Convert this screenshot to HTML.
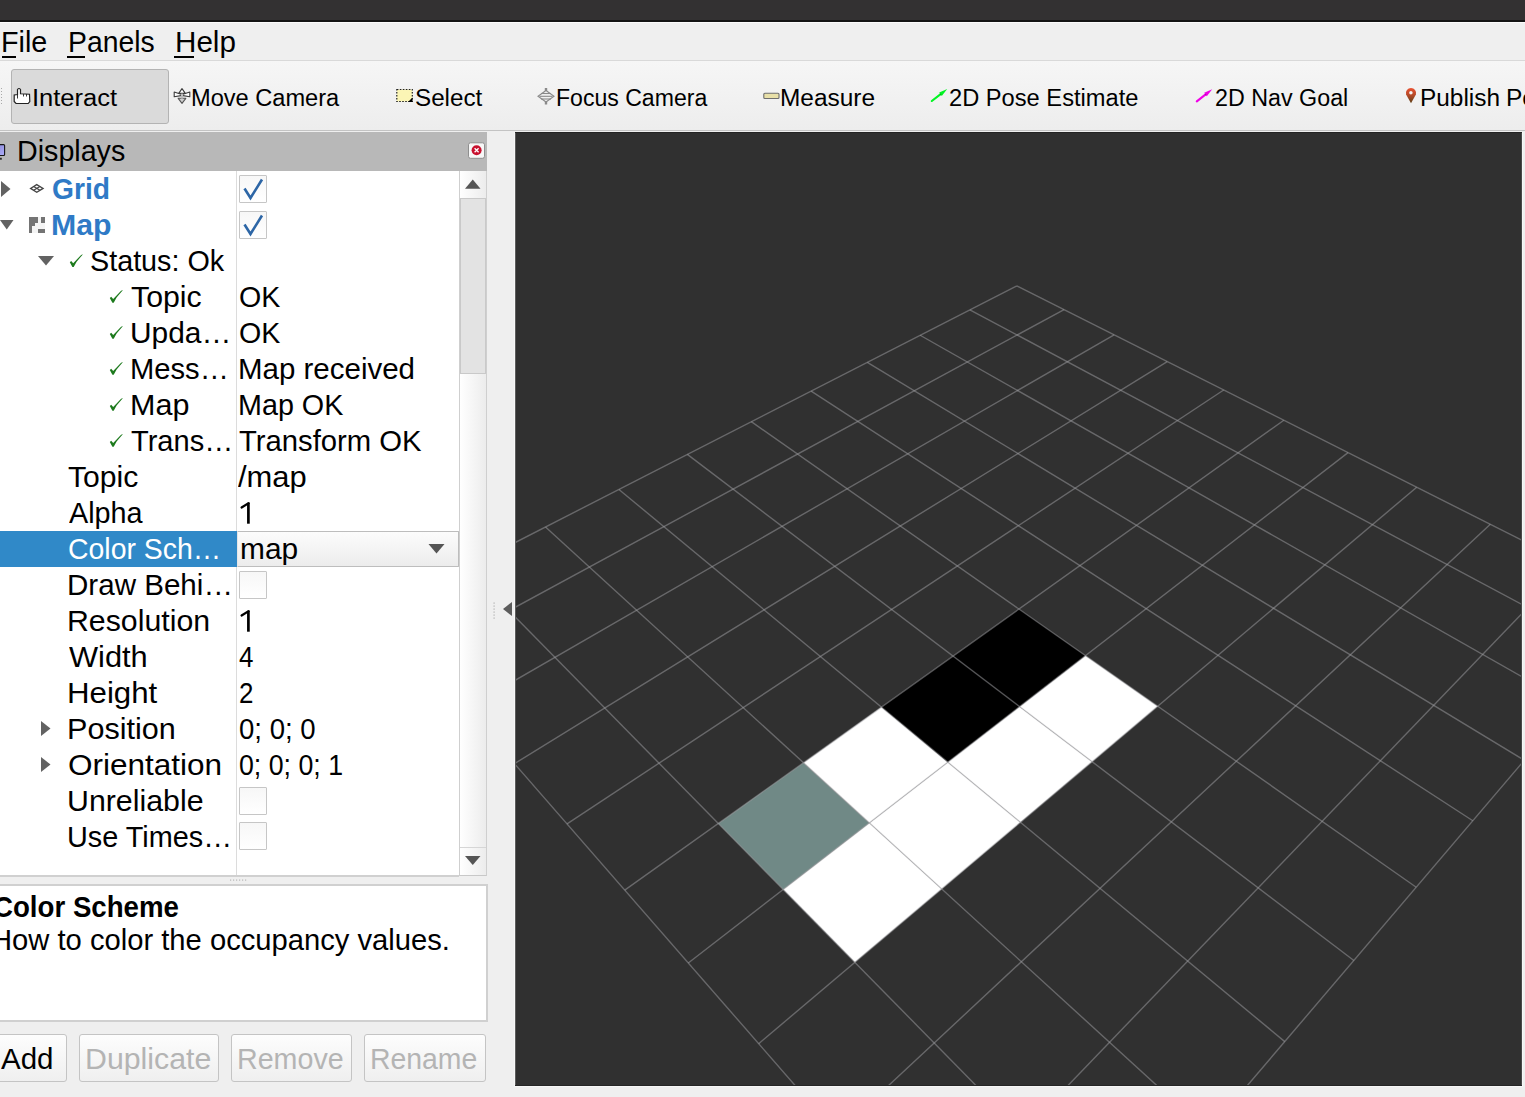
<!DOCTYPE html><html><head><meta charset="utf-8"><title>RViz</title><style>
*{margin:0;padding:0;box-sizing:border-box}
html,body{width:1525px;height:1097px;overflow:hidden;background:#efefef;font-family:"Liberation Sans",sans-serif;position:relative}
.t{position:absolute;white-space:pre;transform-origin:0 0}
.a{position:absolute}
svg.g3d line{stroke:#a0a0a4;stroke-opacity:0.5;stroke-width:1.4}
</style></head><body>
<div class="a" style="left:0;top:0;width:1525px;height:20px;background:#333132"></div><div class="a" style="left:0;top:20px;width:1525px;height:2px;background:#141414"></div><div class="a" style="left:0;top:22px;width:1525px;height:1px;background:#fbfbfb"></div><div class="a" style="left:0;top:60px;width:1525px;height:1px;background:#d9d9d9"></div><div class="a" style="left:0;top:61px;width:1525px;height:69px;background:linear-gradient(#f6f6f6,#ededed)"></div><div class="a" style="left:0;top:130px;width:1525px;height:1px;background:#c3c3c3"></div><div class="a" style="left:11px;top:69px;width:158px;height:55px;background:#dadada;border:1px solid #b3b3b3;border-radius:3px"></div><div class="a" style="left:0;top:132px;width:487px;height:39px;background:#b8b8b8"></div><div class="a" style="left:0;top:171px;width:459px;height:706px;background:#fff;border-bottom:2px solid #d0d0d0"></div><div class="a" style="left:236px;top:171px;width:1px;height:704px;background:#dcdcdc"></div><div class="a" style="left:0;top:531px;width:237px;height:36px;background:#3089c8"></div><div class="a" style="left:459px;top:171px;width:28px;height:705px;background:linear-gradient(90deg,#fff,#ececec);border-left:1px solid #cfcfcf;border-right:1px solid #cfcfcf;border-bottom:1px solid #c8c8c8"></div><div class="a" style="left:460px;top:198px;width:26px;height:176px;background:#e3e3e3;border:1px solid #c9c9c9"></div><div class="a" style="left:460px;top:847px;width:26px;height:1px;background:#d6d6d6"></div><div class="a" style="left:-2px;top:884px;width:490px;height:138px;background:#fff;border:2px solid #d0d0d0"></div><div class="a" style="left:1px;top:88px;width:1px;height:1px;background:#a8a8a8"></div><div class="a" style="left:1px;top:91px;width:1px;height:1px;background:#a8a8a8"></div><div class="a" style="left:1px;top:94px;width:1px;height:1px;background:#a8a8a8"></div><div class="a" style="left:1px;top:97px;width:1px;height:1px;background:#a8a8a8"></div><div class="a" style="left:1px;top:100px;width:1px;height:1px;background:#a8a8a8"></div><div class="a" style="left:1px;top:103px;width:1px;height:1px;background:#a8a8a8"></div><div class="a" style="left:237px;top:531px;width:222px;height:36px;background:linear-gradient(#fcfcfc,#ececec);border:1px solid #bdbdbd;border-left-color:#e6e6e6;border-radius:1px"></div><div class="a" style="left:239px;top:175px;width:28px;height:28px;background:linear-gradient(#f7f7f7,#ffffff);border:1px solid #c6c6c6;border-radius:1px"></div><div class="a" style="left:239px;top:211px;width:28px;height:28px;background:linear-gradient(#f7f7f7,#ffffff);border:1px solid #c6c6c6;border-radius:1px"></div><div class="a" style="left:239px;top:571px;width:28px;height:28px;background:linear-gradient(#f7f7f7,#ffffff);border:1px solid #c6c6c6;border-radius:1px"></div><div class="a" style="left:239px;top:787px;width:28px;height:28px;background:linear-gradient(#f7f7f7,#ffffff);border:1px solid #c6c6c6;border-radius:1px"></div><div class="a" style="left:239px;top:822px;width:28px;height:28px;background:linear-gradient(#f7f7f7,#ffffff);border:1px solid #c6c6c6;border-radius:1px"></div><div class="a" style="left:-6px;top:1034px;width:72.5px;height:48px;background:linear-gradient(#fdfdfd,#efefef);border:1px solid #c4c4c4;border-radius:3px"></div><div class="a" style="left:79px;top:1034px;width:140px;height:48px;background:linear-gradient(#fdfdfd,#efefef);border:1px solid #c4c4c4;border-radius:3px"></div><div class="a" style="left:231px;top:1034px;width:120.5px;height:48px;background:linear-gradient(#fdfdfd,#efefef);border:1px solid #c4c4c4;border-radius:3px"></div><div class="a" style="left:364px;top:1034px;width:121.5px;height:48px;background:linear-gradient(#fdfdfd,#efefef);border:1px solid #c4c4c4;border-radius:3px"></div><div class="a" style="left:514px;top:132px;width:1px;height:955px;background:#f7f7f7"></div><div class="a" style="left:515px;top:1086px;width:1008px;height:1px;background:#f7f7f7"></div><div class="a" style="left:1522px;top:132px;width:1px;height:955px;background:#f7f7f7"></div><svg class="a" style="left:0;top:0" width="1525" height="1097" viewBox="0 0 1525 1097"><polygon points="1,181 10.5,189 1,197" fill="#626262"/><polygon points="0,220 13.5,220 6.75,229.5" fill="#626262"/><polygon points="38,256 54,256 46,265.5" fill="#626262"/><polygon points="41,721 50.5,728.5 41,736" fill="#626262"/><polygon points="41,757 50.5,764.5 41,772" fill="#626262"/><g fill="none" stroke="#454545" stroke-width="1.3"><polygon points="36.75,184.6 43.1,188.4 36.75,192.2 30.6,188.4"/><line x1="33.7" y1="186.5" x2="39.9" y2="190.3"/><line x1="39.9" y1="186.5" x2="33.7" y2="190.3"/></g><rect x="29" y="217" width="16" height="16" fill="#f4f4f4"/><rect x="29" y="217" width="9" height="6" fill="#747474"/><rect x="29" y="223" width="6" height="3" fill="#747474"/><rect x="29" y="226" width="3" height="7" fill="#747474"/><rect x="41" y="217" width="4" height="6" fill="#747474"/><rect x="38" y="229" width="7" height="4" fill="#747474"/><polygon points="69.80,262.20 72.40,266.90 73.70,266.90 76.60,261.80 83.00,254.20 81.10,255.00 73.20,263.20 71.20,260.90" fill="#1d7a1d"/><polygon points="109.80,298.00 112.40,302.70 113.70,302.70 116.60,297.60 123.00,290.00 121.10,290.80 113.20,299.00 111.20,296.70" fill="#1d7a1d"/><polygon points="109.80,334.00 112.40,338.70 113.70,338.70 116.60,333.60 123.00,326.00 121.10,326.80 113.20,335.00 111.20,332.70" fill="#1d7a1d"/><polygon points="109.80,370.00 112.40,374.70 113.70,374.70 116.60,369.60 123.00,362.00 121.10,362.80 113.20,371.00 111.20,368.70" fill="#1d7a1d"/><polygon points="109.80,406.00 112.40,410.70 113.70,410.70 116.60,405.60 123.00,398.00 121.10,398.80 113.20,407.00 111.20,404.70" fill="#1d7a1d"/><polygon points="109.80,442.00 112.40,446.70 113.70,446.70 116.60,441.60 123.00,434.00 121.10,434.80 113.20,443.00 111.20,440.70" fill="#1d7a1d"/><path d="M244.5,188.5 L250.5,198 L262,179.5" fill="none" stroke="#2d66a6" stroke-width="2.6" stroke-linejoin="miter"/><path d="M244.5,224.5 L250.5,234 L262,215.5" fill="none" stroke="#2d66a6" stroke-width="2.6" stroke-linejoin="miter"/><polygon points="428.5,544 444.5,544 436.5,553.5" fill="#555"/><polygon points="465,188.8 480.5,188.8 472.75,179.5" fill="#555"/><polygon points="465,856 480.5,856 472.75,865" fill="#555"/><polygon points="512,602 512,616 503,609" fill="#5c5c5c"/><rect x="493.5" y="602.5" width="1.2" height="1.2" fill="#b0b0b0"/><rect x="493.5" y="605.5" width="1.2" height="1.2" fill="#b0b0b0"/><rect x="493.5" y="608.5" width="1.2" height="1.2" fill="#b0b0b0"/><rect x="493.5" y="611.5" width="1.2" height="1.2" fill="#b0b0b0"/><rect x="493.5" y="614.5" width="1.2" height="1.2" fill="#b0b0b0"/><rect x="493.5" y="617.5" width="1.2" height="1.2" fill="#b0b0b0"/><rect x="230" y="879.5" width="1.2" height="1.2" fill="#b8b8b8"/><rect x="233" y="879.5" width="1.2" height="1.2" fill="#b8b8b8"/><rect x="236" y="879.5" width="1.2" height="1.2" fill="#b8b8b8"/><rect x="239" y="879.5" width="1.2" height="1.2" fill="#b8b8b8"/><rect x="242" y="879.5" width="1.2" height="1.2" fill="#b8b8b8"/><rect x="245" y="879.5" width="1.2" height="1.2" fill="#b8b8b8"/><rect x="468.5" y="142.8" width="16" height="15.5" rx="2" fill="#f7f7f7" stroke="#8f8f8f" stroke-width="1"/><circle cx="476.6" cy="150.2" r="5" fill="#c8102e"/><path d="M474.6,148.2 L478.6,152.2 M478.6,148.2 L474.6,152.2" stroke="#fff" stroke-width="1.3"/><defs><linearGradient id="mg" x1="0" y1="0" x2="1" y2="1"><stop offset="0" stop-color="#8784d4"/><stop offset="1" stop-color="#aeaefa"/></linearGradient></defs><rect x="-6" y="144.6" width="10.6" height="10.9" rx="1" fill="url(#mg)" stroke="#151515" stroke-width="1.1"/><rect x="-2" y="157.8" width="3.8" height="1.9" fill="#2a2a2a"/><path d="M17.5,94.5 L17.5,89.5 Q19,87.5 20.5,89.5 L20.5,93.8 L29.5,94.2 L29.8,101.5 L28.2,103.5 L16,103.5 L14.2,101.5 L14.2,95 Z" fill="#fff" stroke="#222" stroke-width="1.2"/><path d="M23.5,94 L23.5,96.5 M26.5,94 L26.5,96.5 M17.5,94.5 L17.5,98.5" stroke="#222" stroke-width="0.9"/><g stroke="#3c3c3c" stroke-width="1.1" stroke-linejoin="round"><polygon points="174.2,92 181,94.3 183,94.3 189.8,92 189.8,96.8 183,95.6 181,95.6 174.2,96.8" fill="#fff"/><polygon points="182,88.6 185.3,93.4 178.7,93.4" fill="#fff"/><polygon points="178.2,98.3 185.8,98.3 182,103.4" fill="#cfcfcf" stroke="#555"/></g><rect x="181" y="93.6" width="2" height="5" fill="#bbb"/><rect x="396.8" y="89.5" width="15.5" height="12" fill="#fbf5b5" stroke="#222" stroke-width="1.2" stroke-dasharray="1.6,1.4"/><polygon points="412.5,97.5 412.5,102 408,102" fill="#000"/><g fill="none" stroke="#8a8a8a" stroke-width="1.1"><polygon points="546,90.5 554,96.3 546,102 538,96.3"/><line x1="541" y1="93.5" x2="551" y2="93.5"/><line x1="539.5" y1="96.3" x2="552.5" y2="96.3"/><line x1="541" y1="99" x2="551" y2="99"/></g><rect x="544.8" y="88" width="2.4" height="3" fill="#8a8a8a"/><rect x="544.8" y="101.5" width="2.4" height="3" fill="#8a8a8a"/><rect x="763.8" y="93.3" width="15.2" height="5.2" rx="1" fill="#e8e0a8" stroke="#6e6e6e" stroke-width="1.1"/><line x1="931.8" y1="101.0" x2="941.2839978236613" y2="93.60987182571857" stroke="#00f522" stroke-width="2.1" stroke-linecap="round"/><polygon points="947.2,89.0 941.79,95.88 939.20,92.57" fill="#00f522"/><line x1="940.13" y1="93.75" x2="941.05" y2="94.93" stroke="#007a10" stroke-width="1.2" stroke-opacity="0.5"/><line x1="1196.8" y1="101.3" x2="1206.2839978236611" y2="93.90987182571857" stroke="#f000e6" stroke-width="2.1" stroke-linecap="round"/><polygon points="1212.2,89.3 1206.79,96.18 1204.20,92.87" fill="#f000e6"/><line x1="1205.13" y1="94.05" x2="1206.05" y2="95.23" stroke="#800080" stroke-width="1.2" stroke-opacity="0.5"/><defs><linearGradient id="pg" x1="0" y1="0" x2="0" y2="1"><stop offset="0" stop-color="#ea5030"/><stop offset="0.5" stop-color="#b04a28"/><stop offset="1" stop-color="#5a3c12"/></linearGradient></defs><path d="M1411,103.3 L1406.1,94.6 A5.1,5.1 0 1 1 1415.9,94.6 Z" fill="url(#pg)"/><circle cx="1410.9" cy="92.7" r="1.75" fill="#f4f4f4"/></svg>
<span class="t" style="left:1.25px;top:26.49px;font-size:30.38px;line-height:30.38px;color:#000;transform:scaleX(0.9451);">File</span>
<span class="t" style="left:68.20px;top:26.49px;font-size:30.38px;line-height:30.38px;color:#000;transform:scaleX(0.9327);">Panels</span>
<span class="t" style="left:174.80px;top:26.49px;font-size:30.38px;line-height:30.38px;color:#000;transform:scaleX(0.9748);">Help</span>
<div class="a" style="left:1.6px;top:56px;width:14.4px;height:2px;background:#000"></div><div class="a" style="left:67px;top:56px;width:18px;height:2px;background:#000"></div><div class="a" style="left:174px;top:56px;width:20px;height:2px;background:#000"></div><span class="t" style="left:32.15px;top:85.61px;font-size:24.56px;line-height:24.56px;color:#000;transform:scaleX(1.0389);">Interact</span>
<span class="t" style="left:191.20px;top:85.61px;font-size:24.56px;line-height:24.56px;color:#000;transform:scaleX(0.9615);">Move Camera</span>
<span class="t" style="left:414.60px;top:85.61px;font-size:24.56px;line-height:24.56px;color:#000;transform:scaleX(0.9866);">Select</span>
<span class="t" style="left:556.15px;top:85.61px;font-size:24.56px;line-height:24.56px;color:#000;transform:scaleX(0.9394);">Focus Camera</span>
<span class="t" style="left:780.45px;top:85.61px;font-size:24.56px;line-height:24.56px;color:#000;transform:scaleX(0.9953);">Measure</span>
<span class="t" style="left:949.45px;top:85.61px;font-size:24.56px;line-height:24.56px;color:#000;transform:scaleX(0.9643);">2D Pose Estimate</span>
<span class="t" style="left:1214.60px;top:85.61px;font-size:24.56px;line-height:24.56px;color:#000;transform:scaleX(0.9485);">2D Nav Goal</span>
<span class="t" style="left:1420.45px;top:85.61px;font-size:24.56px;line-height:24.56px;color:#000;transform:scaleX(0.9944);">Publish</span>
<span class="t" style="left:1505.95px;top:85.61px;font-size:24.56px;line-height:24.56px;color:#000;transform:scaleX(1.0000);">Point</span>
<span class="t" style="left:16.85px;top:135.29px;font-size:30.38px;line-height:30.38px;color:#000;transform:scaleX(0.9433);">Displays</span>
<span class="t" style="left:51.80px;top:174.21px;font-size:30.23px;line-height:30.23px;font-weight:bold;color:#2f7ac6;transform:scaleX(0.9338);">Grid</span>
<span class="t" style="left:50.80px;top:210.21px;font-size:30.23px;line-height:30.23px;font-weight:bold;color:#2f7ac6;transform:scaleX(1.0012);">Map</span>
<span class="t" style="left:90.45px;top:246.21px;font-size:30.23px;line-height:30.23px;color:#000;transform:scaleX(0.9510);">Status: Ok</span>
<span class="t" style="left:130.80px;top:282.21px;font-size:30.23px;line-height:30.23px;color:#000;transform:scaleX(1.0023);">Topic</span>
<span class="t" style="left:238.85px;top:282.21px;font-size:30.23px;line-height:30.23px;color:#000;transform:scaleX(0.9460);">OK</span>
<span class="t" style="left:129.80px;top:318.21px;font-size:30.23px;line-height:30.23px;color:#000;transform:scaleX(0.9893);">Upda…</span>
<span class="t" style="left:238.85px;top:318.21px;font-size:30.23px;line-height:30.23px;color:#000;transform:scaleX(0.9460);">OK</span>
<span class="t" style="left:129.80px;top:354.21px;font-size:30.23px;line-height:30.23px;color:#000;transform:scaleX(0.9647);">Mess…</span>
<span class="t" style="left:237.85px;top:354.21px;font-size:30.23px;line-height:30.23px;color:#000;transform:scaleX(0.9758);">Map received</span>
<span class="t" style="left:129.80px;top:390.21px;font-size:30.23px;line-height:30.23px;color:#000;transform:scaleX(1.0099);">Map</span>
<span class="t" style="left:237.85px;top:390.21px;font-size:30.23px;line-height:30.23px;color:#000;transform:scaleX(0.9502);">Map OK</span>
<span class="t" style="left:130.80px;top:426.21px;font-size:30.23px;line-height:30.23px;color:#000;transform:scaleX(0.9610);">Trans…</span>
<span class="t" style="left:238.85px;top:426.21px;font-size:30.23px;line-height:30.23px;color:#000;transform:scaleX(0.9683);">Transform OK</span>
<span class="t" style="left:68.45px;top:462.21px;font-size:30.23px;line-height:30.23px;color:#000;transform:scaleX(0.9973);">Topic</span>
<span class="t" style="left:238.25px;top:462.21px;font-size:30.23px;line-height:30.23px;color:#000;transform:scaleX(1.0230);">/map</span>
<span class="t" style="left:69.45px;top:498.21px;font-size:30.23px;line-height:30.23px;color:#000;transform:scaleX(0.9523);">Alpha</span>
<span class="t" style="left:68.45px;top:534.21px;font-size:30.23px;line-height:30.23px;color:#fff;transform:scaleX(0.9401);">Color Sch…</span>
<span class="t" style="left:239.85px;top:534.21px;font-size:30.23px;line-height:30.23px;color:#000;transform:scaleX(0.9893);">map</span>
<span class="t" style="left:67.45px;top:570.21px;font-size:30.23px;line-height:30.23px;color:#000;transform:scaleX(0.9784);">Draw Behi…</span>
<span class="t" style="left:67.45px;top:606.21px;font-size:30.23px;line-height:30.23px;color:#000;transform:scaleX(1.0023);">Resolution</span>
<span class="t" style="left:69.45px;top:642.21px;font-size:30.23px;line-height:30.23px;color:#000;transform:scaleX(1.0192);">Width</span>
<span class="t" style="left:238.85px;top:642.21px;font-size:30.23px;line-height:30.23px;color:#000;transform:scaleX(0.8582);">4</span>
<span class="t" style="left:67.45px;top:678.21px;font-size:30.23px;line-height:30.23px;color:#000;transform:scaleX(1.0330);">Height</span>
<span class="t" style="left:238.85px;top:678.21px;font-size:30.23px;line-height:30.23px;color:#000;transform:scaleX(0.8582);">2</span>
<span class="t" style="left:67.45px;top:714.21px;font-size:30.23px;line-height:30.23px;color:#000;transform:scaleX(1.0114);">Position</span>
<span class="t" style="left:238.85px;top:714.21px;font-size:30.23px;line-height:30.23px;color:#000;transform:scaleX(0.9120);">0; 0; 0</span>
<span class="t" style="left:68.45px;top:750.21px;font-size:30.23px;line-height:30.23px;color:#000;transform:scaleX(1.0425);">Orientation</span>
<span class="t" style="left:238.85px;top:750.21px;font-size:30.23px;line-height:30.23px;color:#000;transform:scaleX(0.8843);">0; 0; 0; 1</span>
<span class="t" style="left:67.45px;top:786.21px;font-size:30.23px;line-height:30.23px;color:#000;transform:scaleX(1.0032);">Unreliable</span>
<span class="t" style="left:67.45px;top:822.21px;font-size:30.23px;line-height:30.23px;color:#000;transform:scaleX(0.9539);">Use Times…</span>
<span class="t" style="left:-7.50px;top:892.15px;font-size:29.94px;line-height:29.94px;font-weight:bold;color:#000;transform:scaleX(0.9237);">Color Scheme</span>
<span class="t" style="left:-9.50px;top:925.32px;font-size:29.51px;line-height:29.51px;color:#000;transform:scaleX(0.9890);">How to color the occupancy values.</span>
<span class="t" style="left:1.25px;top:1043.60px;font-size:29.65px;line-height:29.65px;color:#000;transform:scaleX(0.9950);">Add</span>
<span class="t" style="left:85.40px;top:1043.60px;font-size:29.65px;line-height:29.65px;color:#b4b4b4;transform:scaleX(1.0226);">Duplicate</span>
<span class="t" style="left:237.25px;top:1043.60px;font-size:29.65px;line-height:29.65px;color:#b4b4b4;transform:scaleX(0.9663);">Remove</span>
<span class="t" style="left:370.25px;top:1043.60px;font-size:29.65px;line-height:29.65px;color:#b4b4b4;transform:scaleX(0.9578);">Rename</span>
<svg class="a" style="left:0;top:0" width="1525" height="1097" viewBox="0 0 1525 1097"><path d="M248.4,523.7 V502.80000000000007" stroke="#000" stroke-width="2.7"/><path d="M248.6,503.1 L241.6,507.50000000000006" stroke="#000" stroke-width="2.3" stroke-linecap="round"/><path d="M248.4,631.7 V610.8000000000001" stroke="#000" stroke-width="2.7"/><path d="M248.6,611.1 L241.6,615.5" stroke="#000" stroke-width="2.3" stroke-linecap="round"/></svg>
<svg class="g3d" width="1007" height="954" viewBox="515 132 1007 954" style="position:absolute;left:515px;top:132px">
<rect x="515" y="132" width="1007" height="954" fill="#303030"/>
<polygon points="718.28,823.41 803.49,762.68 869.39,822.89 783.27,889.51" fill="#708986"/>
<polygon points="783.27,889.51 869.39,822.89 941.68,888.93 854.88,962.34" fill="#ffffff"/>
<polygon points="803.49,762.68 881.44,707.11 947.85,762.19 869.39,822.89" fill="#ffffff"/>
<polygon points="869.39,822.89 947.85,762.19 1020.40,822.36 941.68,888.93" fill="#ffffff"/>
<polygon points="881.44,707.11 953.02,656.09 1019.63,706.67 947.85,762.19" fill="#000000"/>
<polygon points="947.85,762.19 1019.63,706.67 1092.12,761.71 1020.40,822.36" fill="#ffffff"/>
<polygon points="953.02,656.09 1018.98,609.08 1085.54,655.68 1019.63,706.67" fill="#000000"/>
<polygon points="1019.63,706.67 1085.54,655.68 1157.73,706.22 1092.12,761.71" fill="#ffffff"/>
<line x1="381.39" y1="611.00" x2="1023.91" y2="1347.85"/>
<line x1="466.57" y1="567.41" x2="1121.39" y2="1233.40"/>
<line x1="545.53" y1="526.99" x2="1207.74" y2="1132.02"/>
<line x1="618.95" y1="489.42" x2="1284.75" y2="1041.59"/>
<line x1="687.37" y1="454.40" x2="1353.87" y2="960.44"/>
<line x1="751.30" y1="421.68" x2="1416.25" y2="887.20"/>
<line x1="811.16" y1="391.04" x2="1472.82" y2="820.78"/>
<line x1="867.33" y1="362.29" x2="1524.37" y2="760.25"/>
<line x1="920.14" y1="335.26" x2="1571.53" y2="704.88"/>
<line x1="969.89" y1="309.80" x2="1614.85" y2="654.02"/>
<line x1="1016.82" y1="285.78" x2="1654.76" y2="607.16"/>
<line x1="381.39" y1="611.00" x2="1016.82" y2="285.78"/>
<line x1="422.15" y1="657.75" x2="1064.06" y2="309.58"/>
<line x1="466.37" y1="708.46" x2="1114.11" y2="334.79"/>
<line x1="514.49" y1="763.65" x2="1167.22" y2="361.55"/>
<line x1="567.07" y1="823.94" x2="1223.69" y2="389.99"/>
<line x1="624.75" y1="890.09" x2="1283.83" y2="420.29"/>
<line x1="688.30" y1="962.97" x2="1348.02" y2="452.63"/>
<line x1="758.69" y1="1043.69" x2="1416.69" y2="487.22"/>
<line x1="837.06" y1="1133.57" x2="1490.32" y2="524.31"/>
<line x1="924.86" y1="1234.27" x2="1569.46" y2="564.18"/>
<line x1="1023.91" y1="1347.85" x2="1654.76" y2="607.16"/>
<rect x="515" y="132" width="1" height="954" fill="#5c5c5c"/>
<rect x="1521" y="132" width="1" height="954" fill="#4a4a4a"/>
<rect x="515" y="132" width="1007" height="1" fill="#232323"/>
<rect x="515" y="1085" width="1007" height="1" fill="#262626"/>
</svg></body></html>
